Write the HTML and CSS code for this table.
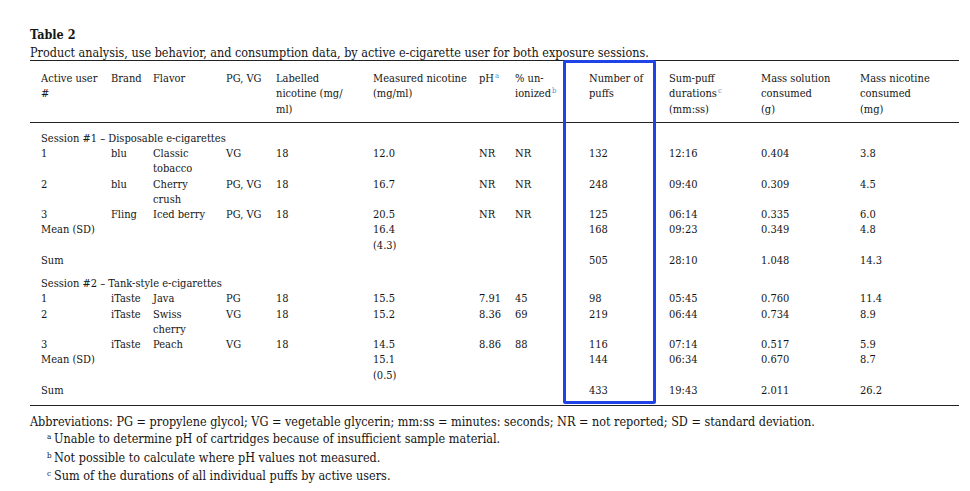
FILE: index.html
```html
<!DOCTYPE html>
<html>
<head>
<meta charset="utf-8">
<link rel="stylesheet" href="styles.css">
</head>
<body>
<div class="page">
  <div class="title">Table 2</div>
  <div class="caption">Product analysis, use behavior, and consumption data, by active e-cigarette user for both exposure sessions.</div>
  <div class="wrap">
    <table class="data">
      <colgroup>
        <col class="c1"><col class="c2"><col class="c3"><col class="c4"><col class="c5"><col class="c6">
        <col class="c7"><col class="c8"><col class="c9"><col class="c10"><col class="c11"><col class="c12">
      </colgroup>
      <thead>
        <tr>
          <th class="first">Active user<br>#</th>
          <th>Brand</th>
          <th>Flavor</th>
          <th>PG, VG</th>
          <th>Labelled<br>nicotine (mg/<br>ml)</th>
          <th>Measured nicotine<br>(mg/ml)</th>
          <th>pH<sup class="ref">a</sup></th>
          <th>% un-<br>ionized<sup class="ref">b</sup></th>
          <th>Number of<br>puffs</th>
          <th>Sum-puff<br>durations<sup class="ref">c</sup><br>(mm:ss)</th>
          <th>Mass solution<br>consumed<br>(g)</th>
          <th>Mass nicotine<br>consumed<br>(mg)</th>
        </tr>
      </thead>
      <tbody class="s1">
        <tr class="sess"><td class="first" colspan="12">Session #1 – Disposable e-cigarettes</td></tr>
        <tr><td class="first">1</td><td>blu</td><td>Classic<br>tobacco</td><td>VG</td><td>18</td><td>12.0</td><td>NR</td><td>NR</td><td>132</td><td>12:16</td><td>0.404</td><td>3.8</td></tr>
        <tr><td class="first">2</td><td>blu</td><td>Cherry<br>crush</td><td>PG, VG</td><td>18</td><td>16.7</td><td>NR</td><td>NR</td><td>248</td><td>09:40</td><td>0.309</td><td>4.5</td></tr>
        <tr><td class="first">3</td><td>Fling</td><td>Iced berry</td><td>PG, VG</td><td>18</td><td>20.5</td><td>NR</td><td>NR</td><td>125</td><td>06:14</td><td>0.335</td><td>6.0</td></tr>
        <tr><td class="first">Mean (SD)</td><td></td><td></td><td></td><td></td><td>16.4<br>(4.3)</td><td></td><td></td><td>168</td><td>09:23</td><td>0.349</td><td>4.8</td></tr>
        <tr class="sum"><td class="first">Sum</td><td></td><td></td><td></td><td></td><td></td><td></td><td></td><td>505</td><td>28:10</td><td>1.048</td><td>14.3</td></tr>
      </tbody>
      <tbody class="s2">
        <tr class="sess"><td class="first" colspan="12">Session #2 – Tank-style e-cigarettes</td></tr>
        <tr><td class="first">1</td><td>iTaste</td><td>Java</td><td>PG</td><td>18</td><td>15.5</td><td>7.91</td><td>45</td><td>98</td><td>05:45</td><td>0.760</td><td>11.4</td></tr>
        <tr><td class="first">2</td><td>iTaste</td><td>Swiss<br>cherry</td><td>VG</td><td>18</td><td>15.2</td><td>8.36</td><td>69</td><td>219</td><td>06:44</td><td>0.734</td><td>8.9</td></tr>
        <tr><td class="first">3</td><td>iTaste</td><td>Peach</td><td>VG</td><td>18</td><td>14.5</td><td>8.86</td><td>88</td><td>116</td><td>07:14</td><td>0.517</td><td>5.9</td></tr>
        <tr><td class="first">Mean (SD)</td><td></td><td></td><td></td><td></td><td>15.1<br>(0.5)</td><td></td><td></td><td>144</td><td>06:34</td><td>0.670</td><td>8.7</td></tr>
        <tr class="sum"><td class="first">Sum</td><td></td><td></td><td></td><td></td><td></td><td></td><td></td><td>433</td><td>19:43</td><td>2.011</td><td>26.2</td></tr>
      </tbody>
    </table>
    <div class="highlight"></div>
  </div>
  <div class="notes">
    <p class="abbr">Abbreviations: PG = propylene glycol; VG = vegetable glycerin; mm:ss = minutes: seconds; NR = not reported; SD = standard deviation.</p>
    <p class="fn"><sup>a</sup>Unable to determine pH of cartridges because of insufficient sample material.</p>
    <p class="fn"><sup>b</sup>Not possible to calculate where pH values not measured.</p>
    <p class="fn"><sup>c</sup>Sum of the durations of all individual puffs by active users.</p>
  </div>
</div>
</body>
</html>
```
FILE: styles.css
```css
html, body {
  margin: 0;
  padding: 0;
  background: #ffffff;
}
body {
  font-family: "DejaVu Serif Condensed", "DejaVu Serif", "Liberation Serif", serif;
  font-stretch: condensed;
  color: #151515;
  width: 970px;
  height: 491px;
  overflow: hidden;
}
.page {
  padding: 27px 11px 0 30px;
}
.title {
  font-weight: bold;
  font-size: 12.5px;
  line-height: 15px;
}
.caption {
  font-size: 12.5px;
  line-height: 15px;
  margin-top: 3px;
}
.wrap {
  position: relative;
  margin-top: 0;
}
.data {
  border-collapse: collapse;
  table-layout: fixed;
  width: 929px;
  font-size: 11px;
  line-height: 15.25px;
  border-top: 1px solid #222;
  border-bottom: 1px solid #222;
}
.c1 { width: 81px; }
.c2 { width: 42px; }
.c3 { width: 73px; }
.c4 { width: 50px; }
.c5 { width: 97px; }
.c6 { width: 106px; }
.c7 { width: 36px; }
.c8 { width: 74px; }
.c9 { width: 80px; }
.c10 { width: 92px; }
.c11 { width: 99px; }
.c12 { width: 99px; }
.data th, .data td {
  padding: 0;
  text-align: left;
  vertical-align: top;
  font-weight: normal;
  white-space: nowrap;
}
.data .first {
  padding-left: 11px;
}
.data thead th {
  padding-top: 10px;
  padding-bottom: 5px;
  border-bottom: 1px solid #222;
}
.data .s1 .sess td {
  padding-top: 8px;
}
.data .s1 .sum td {
  padding-bottom: 8px;
}
.data .s2 .sum td {
  padding-bottom: 7px;
}
sup {
  font-size: 7.5px;
  line-height: 0;
  vertical-align: 4px;
}
.ref {
  color: #4a92d6;
  margin-left: 1px;
}
.highlight {
  position: absolute;
  left: 533px;
  top: 0;
  width: 87px;
  height: 338px;
  border: 3px solid #1f43e6;
  border-radius: 2px;
  pointer-events: none;
}
.notes {
  margin-top: 8px;
  font-size: 12.5px;
}
.notes p {
  margin: 0;
}
.abbr {
  line-height: 16px;
}
.fn {
  line-height: 18.5px;
  padding-left: 17px;
}
.fn sup {
  display: inline-block;
  width: 7px;
  font-size: 8px;
  vertical-align: 4px;
}
```
